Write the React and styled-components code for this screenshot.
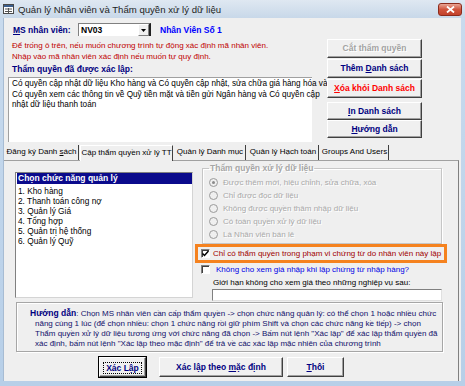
import styled, { createGlobalStyle } from "styled-components";

const GlobalStyle = createGlobalStyle`
  html, body { margin: 0; padding: 0; }
  body {
    width: 465px;
    height: 386px;
    overflow: hidden;
    font-family: "Liberation Sans", Arial, sans-serif;
    font-size: 8px;
  }
  * { box-sizing: border-box; }
`;

const Window = styled.div`
  width: 465px;
  height: 386px;
  display: flex;
  flex-direction: column;
  background: linear-gradient(to bottom, #c9dbee, #b7cfe8);
`;

const TitleBar = styled.div`
  height: 18px;
  flex: none;
  display: flex;
  align-items: center;
  padding: 0 3px 0 3px;
  background: linear-gradient(to bottom, #dfe8f2, #c8d8e9);
`;

const TitleText = styled.span`
  margin-left: 4px;
  font-size: 9.6px;
  color: #1e1e1e;
  white-space: nowrap;
  flex: 1;
`;

const CloseButton = styled.div`
  width: 24px;
  height: 13px;
  border-radius: 3px;
  border: 1px solid #8c2b1c;
  background: linear-gradient(to bottom, #e9a696, #d0543c 50%, #c2412b);
  display: flex;
  align-items: center;
  justify-content: center;
`;

const Client = styled.div`
  flex: 1;
  margin: 0 4px 5px 3px;
  background: #efefef;
  border-left: 1px solid #a7bcd3;
  display: flex;
  flex-direction: column;
`;

const TopSection = styled.div`
  display: flex;
  gap: 15px;
  padding: 5px 0 0 4px;
`;

const LeftCol = styled.div`
  width: 304px;
  display: flex;
  flex-direction: column;
`;

const FieldRow = styled.div`
  display: flex;
  align-items: center;
  height: 13px;
  padding-left: 5px;
`;

const BoldLabel = styled.span`
  font-weight: bold;
  font-size: 8.5px;
  color: ${(p) => p.color || "#000080"};
  white-space: nowrap;
  width: ${(p) => (p.width ? `${p.width}px` : "auto")};
  margin-left: ${(p) => p.offset || 0}px;
`;

const Combo = styled.div`
  width: 73px;
  height: 13px;
  display: flex;
  align-items: stretch;
  background: #fff;
  border-top: 1px solid #808080;
  border-left: 1px solid #808080;
  border-right: 2px solid #202020;
  font-weight: bold;
  font-size: 8.5px;
  color: #000;
`;

const ComboText = styled.span`
  flex: 1;
  padding-left: 2px;
  line-height: 12px;
`;

const ComboArrow = styled.div`
  width: 11px;
  background: #efefef;
  border-left: 1px solid #fff;
  border-top: 1px solid #fff;
  border-right: 1px solid #808080;
  border-bottom: 1px solid #808080;
  display: flex;
  align-items: center;
  justify-content: center;
`;

const Note = styled.div`
  margin-top: 4px;
  padding-left: 4px;
  line-height: 11px;
  color: #c00000;
  white-space: nowrap;
`;

const SectionLabel = styled.div`
  margin-top: 1px;
  padding-left: 4px;
  line-height: 12px;
  font-weight: bold;
  font-size: 8.5px;
  color: #000080;
`;

const TextArea = styled.div`
  margin-top: 2px;
  height: 65px;
  background: #fff;
  border-top: 1px solid #a0a0a0;
  border-left: 1px solid #a0a0a0;
  padding: 1px 3px;
  line-height: 10.5px;
  font-size: 8.2px;
  color: #000;
  white-space: nowrap;
`;

const ButtonCol = styled.div`
  padding-top: 16px;
  display: flex;
  flex-direction: column;
  width: 95px;
`;

const Button = styled.div`
  flex: none;
  width: ${(p) => p.width || 95}px;
  height: ${(p) => p.height || 19}px;
  margin-top: ${(p) => p.gap || 0}px;
  margin-left: ${(p) => p.offset || 0}px;
  background: #f0f0f0;
  border-top: 1px solid #fff;
  border-left: 1px solid #fff;
  border-right: 1px solid #404040;
  border-bottom: 1px solid #404040;
  box-shadow: inset -1px -1px #a0a0a0;
  text-align: center;
  line-height: ${(p) => (p.height || 19) - 2}px;
  font-weight: bold;
  font-size: 8.5px;
  white-space: nowrap;
  color: ${(p) => (p.disabled ? "#a3a3a3" : p.color || "#000080")};
  text-shadow: ${(p) => (p.disabled ? "1px 1px #fff" : "none")};
  outline: ${(p) => (p.primary ? "1px solid #000" : "none")};
`;

const FocusRect = styled.span`
  display: inline-block;
  vertical-align: middle;
  border: 1px dotted #000;
  padding: 0 2px;
  line-height: 10px;
`;

const TabStrip = styled.div`
  display: flex;
  align-items: flex-end;
  height: 15px;
  margin-top: 3px;
  padding-left: 1px;
  position: relative;
  z-index: 1;
`;

const Tab = styled.div`
  width: ${(p) => p.width}px;
  margin-right: ${(p) => p.gap}px;
  height: ${(p) => (p.active ? 16 : 15)}px;
  margin-bottom: ${(p) => (p.active ? -1 : 0)}px;
  background: #efefef;
  border-left: ${(p) => (p.active ? "1px solid #fff" : "none")};
  border-right: 1px solid #404040;
  border-top: ${(p) => (p.active ? "1px solid #fff" : "none")};
  text-align: center;
  line-height: 14px;
  color: #000;
  white-space: nowrap;
`;

const Panel = styled.div`
  flex: 1;
  margin-right: 2px;
  border-top: 1px solid #a0a0a0;
  border-right: 1px solid #808080;
  display: flex;
  flex-direction: column;
`;

const UpperRow = styled.div`
  display: flex;
  align-items: flex-start;
  padding-left: 11px;
`;

const ListBox = styled.div`
  margin-top: 11px;
  width: 178px;
  height: 126px;
  background: #fff;
  border-top: 1px solid #808080;
  border-left: 1px solid #808080;
  border-right: 1px solid #d4d4d4;
  border-bottom: 1px solid #d4d4d4;
  padding: 0 0 0 1px;
`;

const ListHeader = styled.div`
  height: 11px;
  background: #0a0a8c;
  color: #fff;
  font-weight: bold;
  font-size: 8.5px;
  line-height: 11px;
  padding-left: 1px;
  margin-bottom: 2px;
`;

const ListItem = styled.div`
  line-height: 10px;
  padding-left: 1px;
  font-size: 8.3px;
  color: #000;
`;

const RightCol = styled.div`
  margin-top: 2px;
  margin-left: 2px;
  width: 252px;
  display: flex;
  flex-direction: column;
`;

const GroupBox = styled.fieldset`
  margin: 0 5px 0 7px;
  height: 81px;
  padding: 3px 0 1px 6px;
  border: 1px solid #c6c6c6;
  box-shadow: 1px 1px #fff, inset 1px 1px #fff;
`;

const Legend = styled.legend`
  padding: 0 1px;
  font-weight: bold;
  font-size: 8.5px;
  line-height: 10px;
  color: #a6a6a6;
  text-shadow: 1px 1px #fff;
`;

const RadioRow = styled.div`
  display: flex;
  align-items: center;
  height: 13px;
  color: #a8a8a8;
  text-shadow: 1px 1px #fff;
  white-space: nowrap;
`;

const Radio = styled.span`
  width: 9px;
  height: 9px;
  border-radius: 50%;
  border: 1px solid #9a9a9a;
  background: #efefef;
  margin-right: 5px;
  flex: none;
  display: flex;
  align-items: center;
  justify-content: center;
  &::after {
    content: "";
    width: 3px;
    height: 3px;
    border-radius: 50%;
    background: ${(p) => (p.checked ? "#8a8a8a" : "transparent")};
  }
`;

const Highlight = styled.div`
  height: 19px;
  border: 3px solid #f5821f;
  display: flex;
  align-items: center;
  padding-left: 3px;
`;

const CheckRow = styled.div`
  display: flex;
  align-items: center;
  height: 10px;
  margin-top: ${(p) => p.mt || 0}px;
  padding-left: ${(p) => p.pl || 0}px;
  color: ${(p) => p.color};
  white-space: nowrap;
`;

const CheckBox = styled.span`
  width: 9px;
  height: 9px;
  flex: none;
  background: #fff;
  border-top: 1px solid #808080;
  border-left: 1px solid #808080;
  border-right: 1px solid #fff;
  border-bottom: 1px solid #fff;
  box-shadow: inset 1px 1px #404040;
  margin-right: ${(p) => p.gap}px;
  display: flex;
  align-items: center;
  justify-content: center;
`;

const PlainLabel = styled.div`
  margin-top: 4px;
  padding-left: 18px;
  line-height: 10px;
  color: #000;
  white-space: nowrap;
`;

const Input = styled.div`
  margin: 1px 5px 0 17px;
  height: 12px;
  background: #fff;
  border-top: 1px solid #808080;
  border-left: 1px solid #808080;
  border-right: 1px solid #e0e0e0;
  border-bottom: 1px solid #e0e0e0;
`;

const GuideBox = styled.div`
  margin: 1px 0 0 12px;
  width: 427px;
  height: 50px;
  border: 1px solid #a6a6a6;
  box-shadow: inset 1px 1px #fff, 1px 1px #fff;
  padding: 5px 0 0 18px;
  text-indent: -5px;
  line-height: 10px;
  color: #10106a;
  white-space: nowrap;
`;

const GuideTitle = styled.b`
  color: #000080;
  font-size: 8.5px;
`;

const BottomRow = styled.div`
  display: flex;
  margin-top: 5px;
  padding-left: 95px;
`;

const U = styled.span`
  text-decoration: underline;
`;

function TitleIcon() {
  return (
    <svg width="11" height="10" viewBox="0 0 11 10">
      <rect x="0.5" y="0.5" width="10" height="9" fill="#fff" stroke="#4a4a4a" />
      <rect x="1" y="1" width="9" height="2" fill="#3b5e8c" />
      <line x1="2" y1="5" x2="9" y2="5" stroke="#555" />
      <line x1="2" y1="7.5" x2="9" y2="7.5" stroke="#555" />
      <line x1="5.5" y1="4" x2="5.5" y2="9" stroke="#555" />
    </svg>
  );
}

function CloseGlyph() {
  return (
    <svg width="9" height="7" viewBox="0 0 9 7">
      <path d="M1 0.5 L8 6.5 M8 0.5 L1 6.5" stroke="#fff" strokeWidth="1.8" />
    </svg>
  );
}

function Check() {
  return (
    <svg width="7" height="7" viewBox="0 0 7 7">
      <path d="M0.5 3.5 L2.5 5.5 L6.5 1" stroke="#000" strokeWidth="1.5" fill="none" />
    </svg>
  );
}

const tabs = [
  { label: <>Đăng ký Danh <U>s</U>ách</>, width: 74, gap: 1 },
  { label: "Cập thẩm quyền xử lý TT", width: 93, gap: 2, active: true },
  { label: "Quản lý Danh mục", width: 71, gap: 2 },
  { label: "Quản lý Hạch toán", width: 71, gap: 2 },
  { label: "Groups And Users", width: 68, gap: 0 },
];

const functions = [
  "1. Kho hàng",
  "2. Thanh toán công nợ",
  "3. Quản lý Giá",
  "4. Tổng hợp",
  "5. Quản trị hệ thống",
  "6. Quản lý Quỹ",
];

const rights = [
  "Được thêm mới, hiệu chỉnh, sửa chữa, xóa",
  "Chỉ được đọc dữ liệu",
  "Không được quyền thâm nhập dữ liệu",
  "Có toàn quyền xử lý dữ liệu",
  "Là Nhân viên bán lẻ",
];

export default function App() {
  return (
    <>
      <GlobalStyle />
      <Window>
        <TitleBar>
          <TitleIcon />
          <TitleText>Quản lý Nhân viên và Thẩm quyền xử lý dữ liệu</TitleText>
          <CloseButton>
            <CloseGlyph />
          </CloseButton>
        </TitleBar>

        <Client>
          <TopSection>
            <LeftCol>
              <FieldRow>
                <BoldLabel width={65}>
                  <U>M</U>S nhân viên:
                </BoldLabel>
                <Combo>
                  <ComboText>NV03</ComboText>
                  <ComboArrow>
                    <svg width="5" height="3" viewBox="0 0 5 3">
                      <path d="M0 0 H5 L2.5 3 Z" fill="#000" />
                    </svg>
                  </ComboArrow>
                </Combo>
                <BoldLabel color="#0000ff" offset={9}>
                  Nhân Viên Số 1
                </BoldLabel>
              </FieldRow>
              <Note>
                Để trống ô trên, nếu muốn chương trình tự động xác định mã nhân viên.
                <br />
                Nhập vào mã nhân viên xác định nếu muốn tự quy định.
              </Note>
              <SectionLabel>Thẩm quyền đã được xác lập:</SectionLabel>
              <TextArea>
                Có quyền cập nhật dữ liệu Kho hàng và Có quyền cập nhật, sửa chữa giá hàng hóa và
                <br />
                Có quyền xem các thông tin về Quỹ tiền mặt và tiền gửi Ngân hàng và Có quyền cập
                <br />
                nhật dữ liệu thanh toán
              </TextArea>
            </LeftCol>

            <ButtonCol>
              <Button disabled>Cắt thẩm quyền</Button>
              <Button gap={1}>
                Thêm <U>D</U>anh sách
              </Button>
              <Button gap={1} color="#ff0000">
                <U>X</U>óa khỏi Danh sách
              </Button>
              <Button gap={4} height={18}>
                <U>I</U>n Danh sách
              </Button>
              <Button height={18}>
                <U>H</U>ướng dẫn
              </Button>
            </ButtonCol>
          </TopSection>

          <TabStrip>
            {tabs.map((t, i) => (
              <Tab key={i} width={t.width} gap={t.gap} active={t.active}>
                {t.label}
              </Tab>
            ))}
          </TabStrip>

          <Panel>
            <UpperRow>
              <ListBox>
                <ListHeader>Chọn chức năng quản lý</ListHeader>
                {functions.map((f) => (
                  <ListItem key={f}>{f}</ListItem>
                ))}
              </ListBox>

              <RightCol>
                <GroupBox>
                  <Legend>Thẩm quyền xử lý dữ liệu</Legend>
                  {rights.map((r, i) => (
                    <RadioRow key={r}>
                      <Radio checked={i === 0} />
                      {r}
                    </RadioRow>
                  ))}
                </GroupBox>
                <Highlight>
                  <CheckRow color="#a00000">
                    <CheckBox gap={3}>
                      <Check />
                    </CheckBox>
                    Chỉ có thẩm quyền trong phạm vi chứng từ do nhân viên này lập
                  </CheckRow>
                </Highlight>
                <CheckRow color="#0000e6" mt={1} pl={6}>
                  <CheckBox gap={6} />
                  Không cho xem giá nhập khi lập chứng từ nhập hàng?
                </CheckRow>
                <PlainLabel>Giới hạn không cho xem giá theo những nghiệp vụ sau:</PlainLabel>
                <Input />
              </RightCol>
            </UpperRow>

            <GuideBox>
              <GuideTitle>Hướng dẫn</GuideTitle>: Chọn MS nhân viên cần cấp thẩm quyền -&gt; chọn chức năng quản lý: có thể chọn 1 hoặc nhiều chức
              <br />
              năng cùng 1 lúc (để chọn nhiều: chọn 1 chức năng rồi giữ phím Shift và chọn các chức năng kề tiếp) -&gt; chọn
              <br />
              Thẩm quyền xử lý dữ liệu tương ứng với chức năng đã chọn -&gt; Bấm nút lệnh "Xác lập" để xác lập thẩm quyền đã
              <br />
              xác định, bấm nút lệnh "Xác lập theo mặc định" để trả về các xác lập mặc nhiên của chương trình
            </GuideBox>

            <BottomRow>
              <Button width={47} height={20} primary>
                <FocusRect>Xác Lập</FocusRect>
              </Button>
              <Button width={124} height={20} offset={13}>
                Xác lập theo <U>m</U>ặc định
              </Button>
              <Button width={57} height={20} offset={4}>
                <U>T</U>hôi
              </Button>
            </BottomRow>
          </Panel>
        </Client>
      </Window>
    </>
  );
}
